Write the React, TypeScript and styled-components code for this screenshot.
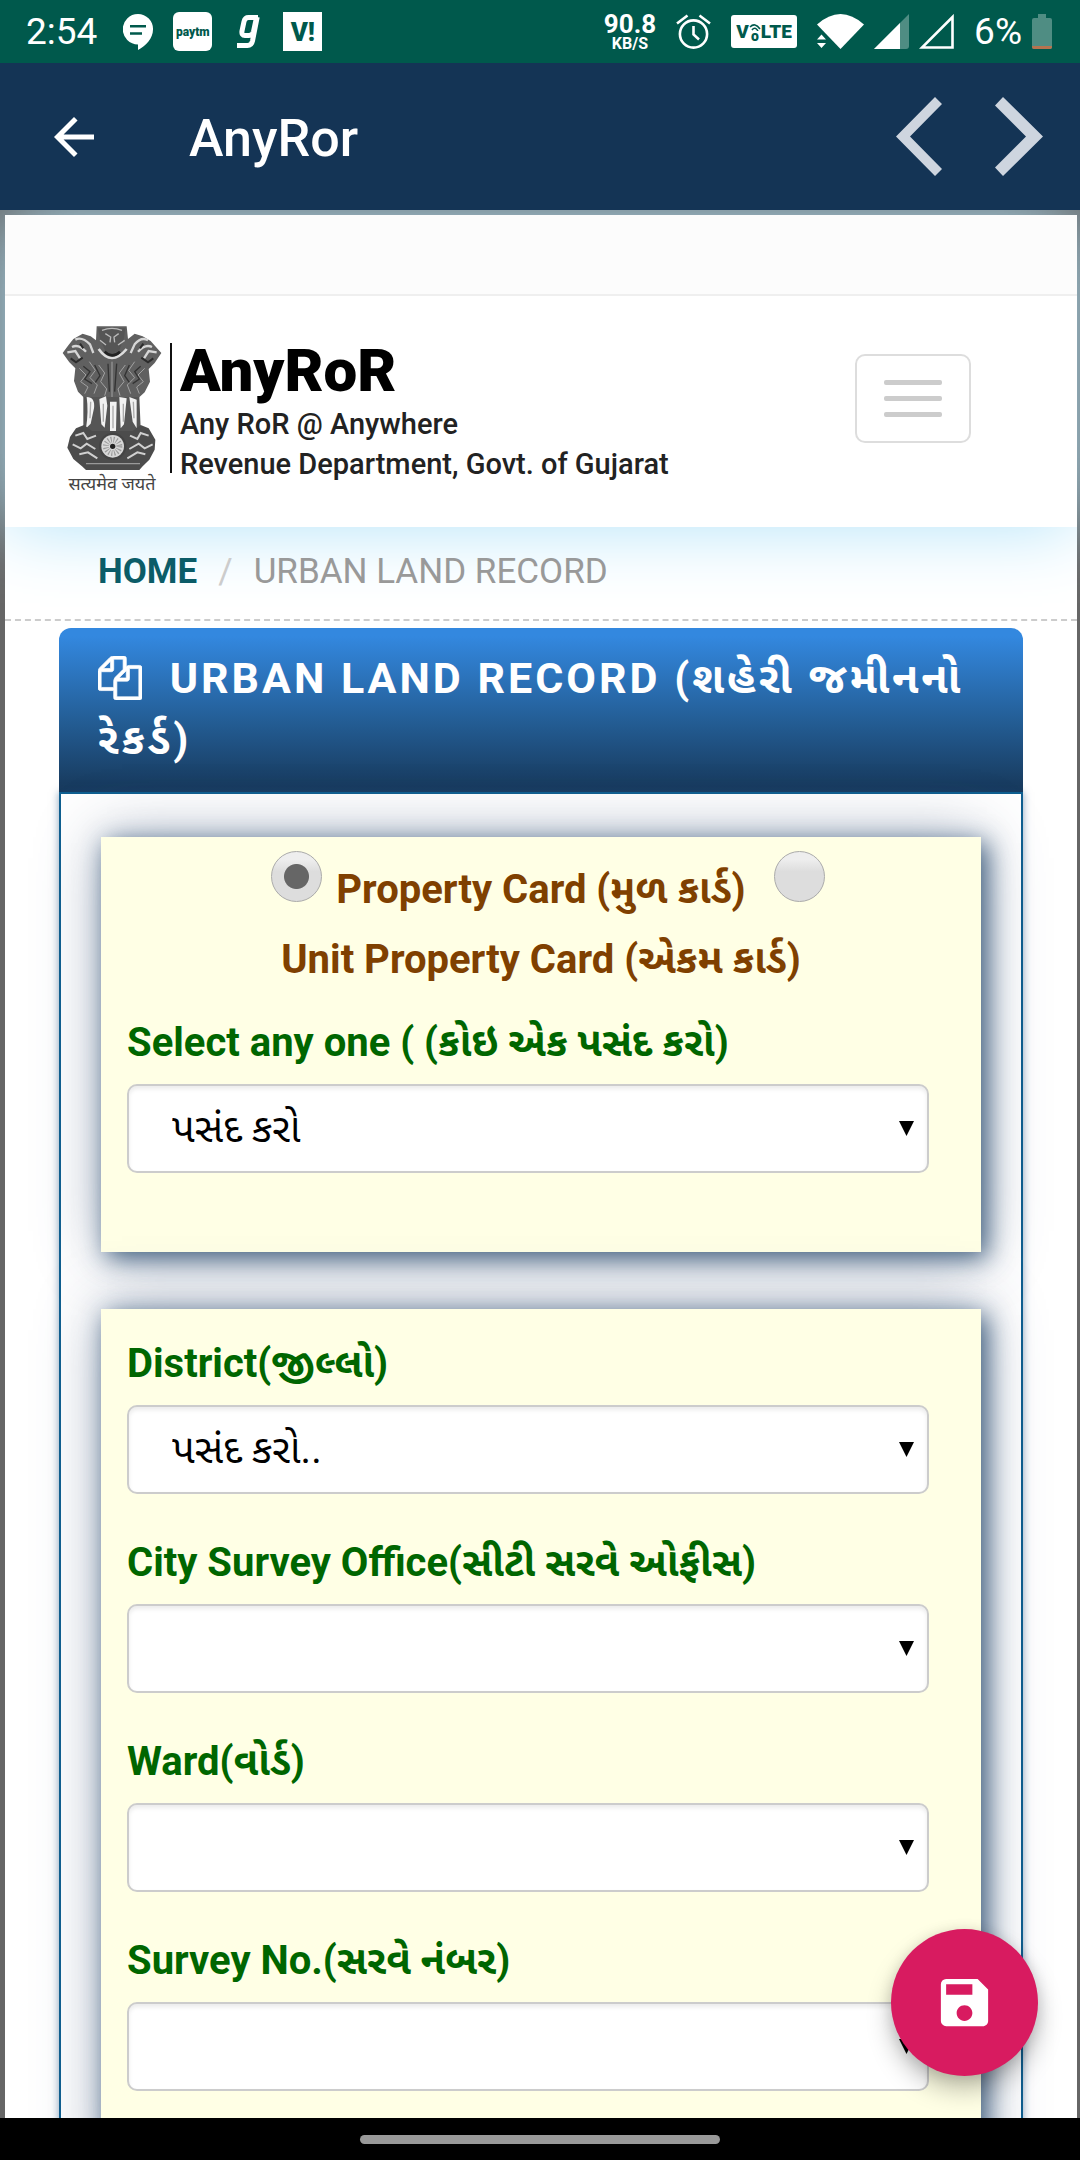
import React, { useState } from "react";
import styled, { createGlobalStyle } from "styled-components";
import { MdSave } from "react-icons/md";

const GlobalStyle = createGlobalStyle`
  *, *::before, *::after { box-sizing: border-box; }
  body {
    margin: 0;
    font-family: Roboto, "Noto Sans", "Noto Sans Gujarati", "Lohit Gujarati", sans-serif;
    background: #666;
  }
  button, select, input { font-family: inherit; }
`;

const Screen = styled.div`
  display: flex;
  flex-direction: column;
  height: 100vh;
  position: relative;
  overflow: hidden;
`;

const StatusBar = styled.header`
  flex: none;
  display: flex;
  justify-content: space-between;
  align-items: center;
  height: 63px;
  padding: 0 28px 0 26px;
  background: #00594c;
  color: #fff;
`;

const StatusGroup = styled.div<{ $gap: number }>`
  display: flex;
  align-items: center;
  gap: ${(p) => p.$gap}px;
`;

const StatusText = styled.span`
  font-size: 37px;
  line-height: 44px;
`;

const Clock = styled(StatusText)`
  margin-right: 6px;
`;

const Speed = styled.span`
  display: flex;
  flex-direction: column;
  align-items: center;
  font-weight: 700;
  font-size: 26px;
  line-height: 24px;
  small {
    font-size: 16px;
    line-height: 16px;
  }
`;

const AppTile = styled.span<{ $radius: number; $size: number }>`
  display: flex;
  align-items: center;
  justify-content: center;
  width: 39px;
  height: 39px;
  border-radius: ${(p) => p.$radius}px;
  background: #fff;
  color: #00594c;
  font-size: ${(p) => p.$size}px;
  line-height: 1;
  font-weight: 900;
`;

const Volte = styled.span`
  display: flex;
  align-items: center;
  justify-content: center;
  width: 66px;
  height: 33px;
  border-radius: 3px;
  background: #fff;
  color: #00594c;
  font-size: 19px;
  line-height: 22px;
  font-weight: 900;
`;

const VolteO = styled.span`
  display: flex;
  flex-direction: column;
  align-items: center;
  font-size: 14px;
  line-height: 10px;
`;

const AppBar = styled.div`
  flex: none;
  display: flex;
  align-items: center;
  height: 147px;
  padding: 0 37px 0 44px;
  background: #143455;
  color: #fff;
`;

const IconButton = styled.button`
  display: flex;
  padding: 0;
  border: 0;
  background: none;
  color: inherit;
`;

const AppTitle = styled.h1`
  flex: 1;
  margin: 0 0 0 85px;
  padding-top: 4px;
  font-size: 52px;
  line-height: 60px;
  font-weight: 500;
`;

const Pager = styled.div`
  display: flex;
  gap: 53px;
  color: #ced5df;
`;

const WebView = styled.div`
  flex: 1;
  min-height: 0;
  overflow: hidden;
  padding: 5px 3px 0 5px;
  background: #666;
`;

const Site = styled.div`
  background: #fff;
`;

const SiteHeader = styled.div`
  background: #fff;
  box-shadow: 0 0 70px #b2e3f9;
`;

const TopStrip = styled.div`
  height: 81px;
  background: #fcfcfc;
  border-bottom: 2px solid #efefef;
`;

const Brand = styled.div`
  display: flex;
  align-items: center;
  justify-content: space-between;
  height: 231px;
  padding: 0 106px 27px 57px;
`;

const Logo = styled.a`
  display: flex;
  align-items: flex-start;
  gap: 8px;
  padding-top: 24px;
  color: #000;
  text-decoration: none;
`;

const EmblemColumn = styled.span`
  display: flex;
  flex-direction: column;
  align-items: center;
  gap: 3px;
  width: 100px;
  font-size: 18px;
  line-height: 22px;
  color: #444;
  white-space: nowrap;
`;

const LogoText = styled.span`
  display: flex;
  flex-direction: column;
  height: 130px;
  margin-top: 18px;
  padding-left: 8px;
  border-left: 2px solid #111;
  font-size: 29px;
  line-height: 40px;
  font-weight: 500;
  white-space: nowrap;
  color: #222;
  strong {
    margin-bottom: 5px;
    font-size: 60px;
    line-height: 56px;
    font-weight: 900;
    color: #000;
  }
`;

const MenuButton = styled.button`
  display: flex;
  flex-direction: column;
  gap: 11px;
  padding: 24px 27px;
  border: 2px solid #ddd;
  border-radius: 10px;
  background: #fff;
`;

const MenuBar = styled.span`
  width: 58px;
  height: 5px;
  border-radius: 2px;
  background: #ccc;
`;

const Breadcrumb = styled.nav`
  display: flex;
  align-items: center;
  gap: 21px;
  height: 94px;
  padding: 0 93px 3px;
  border-bottom: 2px dashed #ccc;
  font-size: 35px;
  line-height: 42px;
  color: #999;
  a {
    color: #0b5c68;
    font-weight: 700;
    text-decoration: none;
  }
  i {
    font-style: normal;
    color: #ccc;
  }
`;

const Panel = styled.section`
  margin: 7px 54px 0;
`;

const PanelTitle = styled.h2`
  margin: 0;
  padding: 20px 39px 22px;
  border-radius: 12px 12px 0 0;
  background: linear-gradient(#3388df 5%, #235c93 58%, #17385a);
  color: #fff;
  font-size: 43px;
  line-height: 61px;
  font-weight: 700;
  letter-spacing: 3px;
  svg {
    vertical-align: -7px;
    margin-right: 14px;
  }
`;

const PanelBody = styled.form`
  display: flex;
  flex-direction: column;
  gap: 57px;
  padding: 43px 40px 80px;
  border: 2px solid #0f5f90;
  box-shadow: 0 0 8px rgba(30, 80, 130, 0.5);
`;

const Card = styled.div<{ $top: number }>`
  display: flex;
  flex-direction: column;
  gap: 40px;
  padding: ${(p) => p.$top}px 52px 79px 26px;
  background: #ffffe5;
  box-shadow: 6px 6px 24px rgba(25, 62, 100, 0.8), 0 0 60px rgba(65, 85, 125, 0.42);
`;

const CardTypes = styled.div`
  margin: 0 -26px -21px 0;
  text-align: center;
  font-size: 40px;
  line-height: 70px;
  font-weight: 700;
  color: #7f4000;
  label {
    white-space: nowrap;
  }
`;

const Radio = styled.input`
  appearance: none;
  width: 51px;
  height: 51px;
  margin: 0 4px 1px 18px;
  border: 1px solid #aaa;
  border-radius: 50%;
  background: linear-gradient(#eee 15%, #ddd 40%);
  &:checked {
    background: radial-gradient(circle, #666 12px, transparent 13px),
      linear-gradient(#eee 15%, #ddd 40%);
  }
`;

const Field = styled.div`
  display: flex;
  flex-direction: column;
  gap: 13px;
  label {
    font-size: 40px;
    line-height: 57px;
    font-weight: 700;
    color: #060;
  }
`;

const SelectWrap = styled.div`
  display: grid;
  align-items: center;
  > * { grid-area: 1 / 1; }
`;

const Select = styled.select`
  appearance: none;
  width: 100%;
  height: 89px;
  padding: 0 60px 0 43px;
  border: 2px solid #ccc;
  border-radius: 10px;
  background: #fff;
  box-shadow: inset 0 3px 4px rgba(0, 0, 0, 0.08);
  color: #000;
  font-size: 40px;
`;

const Caret = styled.span`
  justify-self: end;
  width: 15px;
  height: 15px;
  margin-right: 15px;
  background: #000;
  clip-path: polygon(0 0, 100% 0, 50% 100%);
  pointer-events: none;
`;

const SaveButton = styled.button`
  position: absolute;
  right: 42px;
  bottom: 84px;
  display: flex;
  align-items: center;
  justify-content: center;
  width: 147px;
  height: 147px;
  padding: 0;
  border: 0;
  border-radius: 50%;
  background: #d81b60;
  color: #fff;
  box-shadow: 0 14px 24px rgba(0, 0, 0, 0.25), 0 2px 14px rgba(0, 0, 0, 0.12);
`;

const NavBar = styled.footer`
  flex: none;
  display: flex;
  align-items: center;
  justify-content: center;
  height: 42px;
  background: #000;
`;

const Pill = styled.span`
  width: 360px;
  height: 9px;
  border-radius: 5px;
  background: #999;
`;

function Emblem() {
  return (
    <svg width="100" height="145" viewBox="20 20 300 435" aria-hidden="true">
      {/* side lions, front lion and chest */}
      <path d="M124 24H214L218 62 238 46 262 54 286 68 300 84 318 104 298 134 280 152 284 190 268 222 246 242H90L68 220 56 188 60 150 42 132 22 104 38 82 54 62 82 46 106 54 122 66Z" fill="#606060" />
      <path d="M128 30H210L206 60 192 96 170 108 150 98 134 62Z" fill="#555" />
      <path d="M140 36Q170 24 200 36M150 46L166 56 164 72M190 46L176 56 178 72M134 66 152 80M208 66 188 80" stroke="#bbb" strokeWidth="4" fill="none" />
      <path d="M130 92Q168 146 214 92" stroke="#ddd" strokeWidth="8" fill="none" />
      <path d="M148 100Q170 122 194 100" stroke="#222" strokeWidth="8" fill="none" />
      <path d="M60 64Q80 54 104 78L114 104M50 86Q70 76 92 100M36 102L60 98 74 120M278 66Q258 54 238 78L226 104M290 86Q270 76 248 100M304 102L280 98 266 120" stroke="#d5d5d5" strokeWidth="7" fill="none" />
      <path d="M46 120L62 132 82 118M294 120L278 132 258 118M74 76L84 90M264 76L254 90" stroke="#2c2c2c" strokeWidth="6" fill="none" />
      <path d="M72 150L92 170 76 190 98 206 88 226M102 130L120 156 104 178 126 200 116 226M130 140L148 164 136 190 154 212 148 232M210 140L192 164 206 190 188 212 194 232M238 130L220 156 238 178 216 200 226 226M268 150L248 170 264 190 244 206 252 226M170 130V236" stroke="#a2a2a2" strokeWidth="3" fill="none" />
      <path d="M84 144L104 160 88 182 110 196M118 140L134 172 120 192M222 140L208 172 222 192M256 144L238 160 252 182 232 196M158 136L162 220M184 136L178 220" stroke="#333" strokeWidth="4" fill="none" />
      {/* legs */}
      <path d="M84 236H252L256 330 270 344H66L84 322Z" fill="#555" />
      <path d="M94 236Q120 236 116 270L106 316 92 330Q100 280 94 236ZM132 242L152 234 156 262 148 328 138 318ZM164 250H184L182 338H164ZM192 236L214 240 206 318 196 330ZM222 236L244 244 244 330 232 310Z" fill="#f2f2f2" />
      <path d="M144 256V310M173 262V330M204 256V310M106 250L104 300M234 250L236 300" stroke="#aaa" strokeWidth="4" />
      {/* abacus with the wheel */}
      <path d="M62 330L86 320 110 338H232L256 320 280 330 300 364 298 394 282 424 262 444 252 455H92L80 444 54 422 36 388 44 356Z" fill="#4c4c4c" />
      <path d="M60 352L84 344 96 362 122 352M52 378L76 390 94 376 120 392M72 408L98 402 126 420M280 352L256 344 246 362 224 352M292 378L268 390 250 376 222 392M270 408L246 402 216 420" stroke="#d0d0d0" strokeWidth="6" fill="none" />
      <circle cx="172" cy="384" r="41" fill="#444" />
      <circle cx="172" cy="384" r="34" fill="#d8d8d8" />
      <circle cx="172" cy="384" r="20" fill="none" stroke="#999" strokeWidth="18" strokeDasharray="3 5" />
      <circle cx="172" cy="384" r="8" fill="#222" />
      <path d="M92 436H254" stroke="#999" strokeWidth="4" />
    </svg>
  );
}

function ChatIcon() {
  return (
    <svg width="30" height="36" viewBox="0 0 30 36">
      <path d="M15 0a15 15 0 0 1 15 15.500c0 9-7 16-15 20.500V30.500A15 15 0 0 1 15 0z" fill="#fff" />
      <path d="M7 12.200h16M7 19.500h12" stroke="#00594c" strokeWidth="2.400" />
    </svg>
  );
}

function GaanaIcon() {
  return (
    <svg width="31" height="36" viewBox="0 0 31 36" fill="none" stroke="#fff" strokeWidth="5">
      <path d="M26 3.500H16.500Q13 3.500 12 7.500L10 17Q9.300 21.500 13 21.500H17Q20.500 21.500 21.500 17.500L24.500 3.500M25.200 3L20.500 27Q19.500 31.500 15.500 31.500H5" />
    </svg>
  );
}

function AlarmIcon() {
  return (
    <svg width="35" height="35" viewBox="0 0 35 35" fill="none" stroke="#fff" strokeWidth="2.600">
      <circle cx="17.500" cy="20" r="13.600" />
      <path d="M17.500 12v8.500l5.500 5M1 9.500L11.500 1.500M34 9.500L23.500 1.500" />
    </svg>
  );
}

function WifiIcon() {
  return (
    <svg width="47" height="35" viewBox="0 0 47 35" fill="#fff">
      <path d="M0 10.500Q23.500-10.500 47 10.500L23.500 35z" />
      <path d="M0 25.500L4.500 20.500 9 25.500zM0 29H9L4.500 34z" />
    </svg>
  );
}

function SignalPartial() {
  return (
    <svg width="35" height="35" viewBox="0 0 35 35">
      <path d="M35 0V32q0 3-3 3H0z" fill="#4f8d83" />
      <path d="M26 9V35H0z" fill="#fff" />
    </svg>
  );
}

function SignalEmpty() {
  return (
    <svg width="35" height="35" viewBox="0 0 35 35" fill="none" stroke="#fff" strokeWidth="2.600">
      <path d="M33.500 3V33.500H3z" />
    </svg>
  );
}

function BatteryIcon() {
  return (
    <svg width="20" height="35" viewBox="0 0 20 35">
      <path d="M6 0h8v4h4q2 0 2 2v27q0 2-2 2H2q-2 0-2-2V6q0-2 2-2h4z" fill="#4f8d83" />
      <path d="M0 32h20v1q0 2-2 2H2q-2 0-2-2z" fill="#b5734f" />
    </svg>
  );
}

const choose = "પસંદ કરો";

const locationFields = [
  { id: "district", label: "District(જીલ્લો)", value: choose + ".." },
  { id: "office", label: "City Survey Office(સીટી સરવે ઓફીસ)", value: "" },
  { id: "ward", label: "Ward(વોર્ડ)", value: "" },
  { id: "survey", label: "Survey No.(સરવે નંબર)", value: "" },
];

function SelectField({ id, label, value }: { id: string; label: string; value: string }) {
  return (
    <Field>
      <label htmlFor={id}>{label}</label>
      <SelectWrap>
        <Select id={id}>
          <option>{value}</option>
        </Select>
        <Caret />
      </SelectWrap>
    </Field>
  );
}

export default function App() {
  const [cardType, setCardType] = useState("property");
  return (
    <Screen>
      <GlobalStyle />
      <StatusBar>
        <StatusGroup $gap={20}>
          <Clock>2:54</Clock>
          <ChatIcon />
          <AppTile $radius={6} $size={12}>paytm</AppTile>
          <GaanaIcon />
          <AppTile $radius={0} $size={26}>V!</AppTile>
        </StatusGroup>
        <StatusGroup $gap={20}>
          <Speed>
            90.8
            <small>KB/S</small>
          </Speed>
          <AlarmIcon />
          <Volte>
            V
            <VolteO>
              <svg width="12" height="8" viewBox="0 0 12 8" fill="none" stroke="currentColor" strokeWidth="1.600">
                <path d="M1 4Q6-1 11 6M3 7Q6 3 9 8" />
              </svg>
              o
            </VolteO>
            LTE
          </Volte>
          <StatusGroup $gap={10}>
            <WifiIcon />
            <SignalPartial />
            <SignalEmpty />
          </StatusGroup>
          <StatusGroup $gap={10}>
            <StatusText>6%</StatusText>
            <BatteryIcon />
          </StatusGroup>
        </StatusGroup>
      </StatusBar>
      <AppBar>
        <IconButton aria-label="Back">
          <svg width="60" height="60" viewBox="0 0 24 24" fill="currentColor">
            <path d="M20 11H7.830l5.590-5.590L12 4l-8 8 8 8 1.410-1.410L7.830 13H20z" />
          </svg>
        </IconButton>
        <AppTitle>AnyRor</AppTitle>
        <Pager>
          <IconButton aria-label="Previous page">
            <svg width="46" height="79" viewBox="0 0 46 79" fill="currentColor">
              <path d="M39 0L46 7 14 39.500 46 72 39 79 0 39.500z" />
            </svg>
          </IconButton>
          <IconButton aria-label="Next page">
            <svg width="48" height="79" viewBox="0 0 48 79" fill="currentColor">
              <path d="M8 0L48 39.500 8 79 0 70.500 31 39.500 0 8.500z" />
            </svg>
          </IconButton>
        </Pager>
      </AppBar>
      <WebView>
        <Site>
          <SiteHeader>
            <TopStrip />
            <Brand>
              <Logo href="#">
                <EmblemColumn>
                  <Emblem />
                  <span>सत्यमेव जयते</span>
                </EmblemColumn>
                <LogoText>
                  <strong>AnyRoR</strong>
                  <span>Any RoR @ Anywhere</span>
                  <span>Revenue Department, Govt. of Gujarat</span>
                </LogoText>
              </Logo>
              <MenuButton type="button" aria-label="Toggle navigation">
                <MenuBar />
                <MenuBar />
                <MenuBar />
              </MenuButton>
            </Brand>
          </SiteHeader>
          <Breadcrumb>
            <a href="#">HOME</a>
            <i>/</i>
            <span>URBAN LAND RECORD</span>
          </Breadcrumb>
          <Panel>
            <PanelTitle>
              <svg width="44" height="44" viewBox="0 0 1792 1792" fill="currentColor" stroke="currentColor" strokeWidth="30">
                <path d="M1696 384q40 0 68 28t28 68v1216q0 40-28 68t-68 28h-960q-40 0-68-28t-28-68v-288h-544q-40 0-68-28t-28-68v-672q0-40 20-88t48-76l408-408q28-28 76-48t88-20h416q40 0 68 28t28 68v328q68-40 128-40h416zm-544 213l-299 299h299v-299zm-640-384l-299 299h299v-299zm196 647l316-316v-416h-384v416q0 40-28 68t-68 28h-416v640h512v-256q0-40 20-88t48-76zm956 804v-1152h-384v416q0 40-28 68t-68 28h-416v640h896z" />
              </svg>{" "}
              URBAN LAND RECORD (શહેરી જમીનનો રેકર્ડ)
            </PanelTitle>
            <PanelBody>
              <Card $top={14}>
                <CardTypes>
                  <Radio type="radio" name="type" id="property" checked={cardType === "property"} onChange={() => setCardType("property")} />{" "}
                  <label htmlFor="property">Property Card (મુળ કાર્ડ)</label>{" "}
                  <Radio type="radio" name="type" id="unit" checked={cardType === "unit"} onChange={() => setCardType("unit")} />{" "}
                  <label htmlFor="unit">Unit Property Card (એકમ કાર્ડ)</label>
                </CardTypes>
                <SelectField id="kind" label="Select any one ( (કોઇ એક પસંદ કરો)" value={choose} />
              </Card>
              <Card $top={26}>
                {locationFields.map((f) => (
                  <SelectField key={f.id} {...f} />
                ))}
              </Card>
            </PanelBody>
          </Panel>
        </Site>
      </WebView>
      <NavBar>
        <Pill />
      </NavBar>
      <SaveButton aria-label="Save">
        <MdSave size={63} />
      </SaveButton>
    </Screen>
  );
}
